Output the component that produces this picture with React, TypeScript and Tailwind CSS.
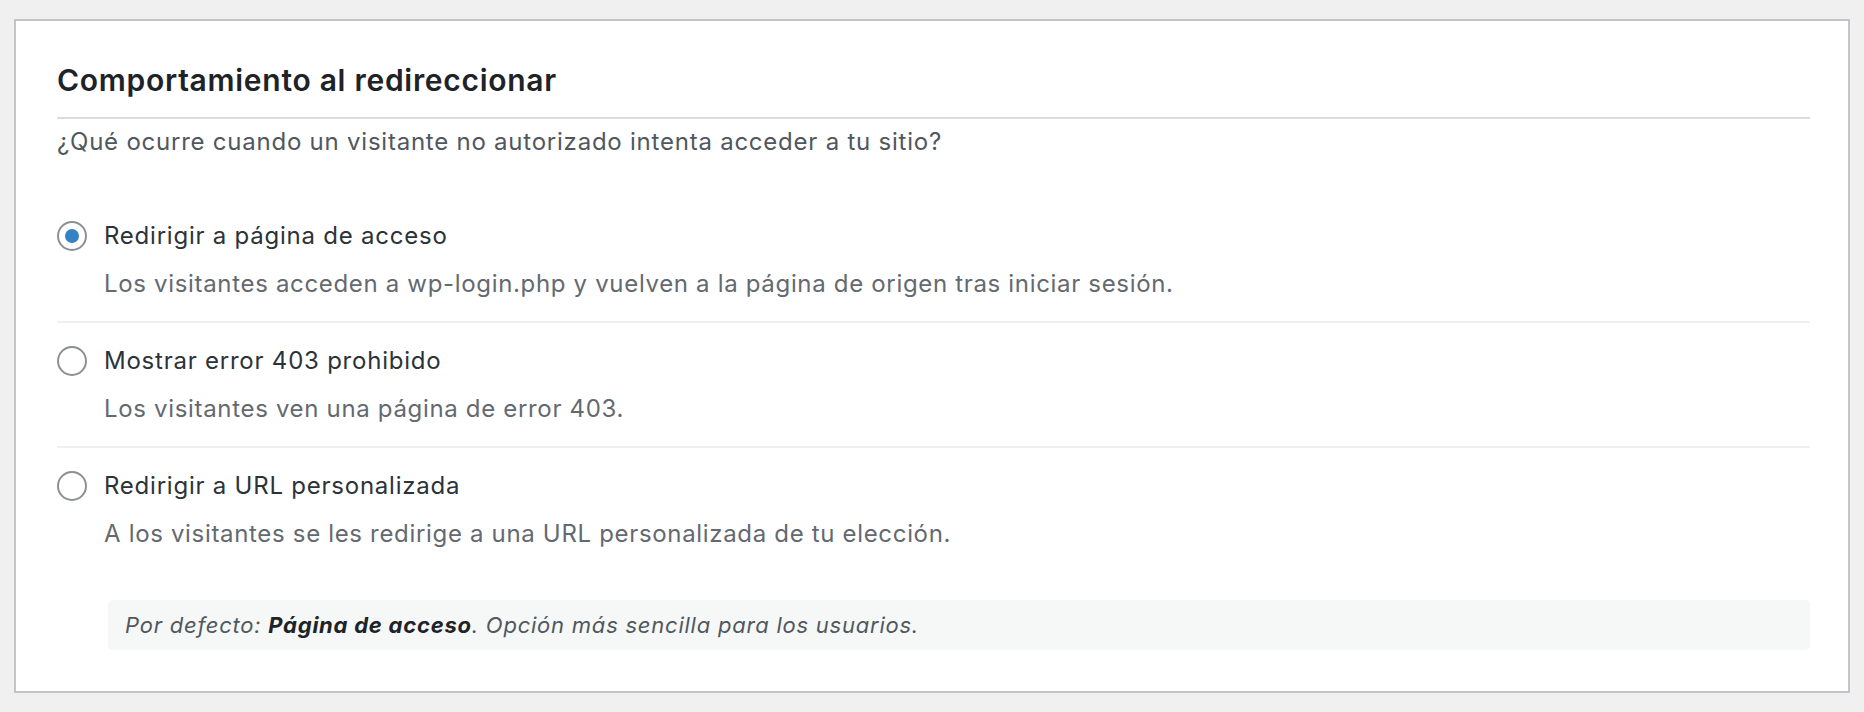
import React, { useState } from "react";

// ── Data ──────────────────────────────────────────────────────────────────────

interface RedirectOption {
  id: string;
  label: string;
  description: string;
}

const OPTIONS: RedirectOption[] = [
  {
    id: "login",
    label: "Redirigir a página de acceso",
    description:
      "Los visitantes acceden a wp-login.php y vuelven a la página de origen tras iniciar sesión.",
  },
  {
    id: "403",
    label: "Mostrar error 403 prohibido",
    description: "Los visitantes ven una página de error 403.",
  },
  {
    id: "custom",
    label: "Redirigir a URL personalizada",
    description: "A los visitantes se les redirige a una URL personalizada de tu elección.",
  },
];

// ── Radio ─────────────────────────────────────────────────────────────────────

function Radio({ checked }: { checked: boolean }) {
  return (
    <span className="flex h-[30px] w-[30px] shrink-0 items-center justify-center rounded-full border-2 border-[#8c8f94] bg-white">
      {checked && <span className="h-[14px] w-[14px] rounded-full bg-[#3582c4]" />}
    </span>
  );
}

// ── Main Export ───────────────────────────────────────────────────────────────

export default function App() {
  const [selected, setSelected] = useState("login");

  return (
    <div
      className="min-h-[712px] bg-[#f0f0f1] px-[14px] pt-[19px] pb-[19px]"
      style={{ fontFamily: "Inter, 'Liberation Sans', Arial, sans-serif" }}
    >
      <div className="border-2 border-[#c3c4c7] bg-white pt-[40px] pr-[38px] pb-[41px] pl-[41px]">
        {/* Header */}
        <h2 className="border-b-2 border-[#dcdcde] pb-[18px] text-[30px] leading-[38px] font-semibold tracking-[0.024em] text-[#1d2327]">
          Comportamiento al redireccionar
        </h2>
        <p className="mt-[7px] text-[24px] leading-[32px] tracking-[0.032em] text-[#50575e]">
          ¿Qué ocurre cuando un visitante no autorizado intenta acceder a tu sitio?
        </p>

        {/* Options */}
        <div className="mt-[40px]">
          {OPTIONS.map((opt, i) => (
            <label
              key={opt.id}
              className={`block cursor-pointer pt-[22px] pb-[21px] ${
                i > 0 ? "border-t-2 border-[#f0f0f1]" : ""
              }`}
              onClick={() => setSelected(opt.id)}
            >
              <div className="flex items-center gap-[17px]">
                <Radio checked={selected === opt.id} />
                <span className="text-[24px] leading-[32px] tracking-[0.032em] text-[#2c3338]">
                  {opt.label}
                </span>
              </div>
              <p className="mt-[16px] pl-[47px] text-[24px] leading-[32px] tracking-[0.028em] text-[#646970]">
                {opt.description}
              </p>
            </label>
          ))}
        </div>

        {/* Note */}
        <div className="mt-[29px] ml-[51px] flex h-[50px] items-center rounded-[5px] bg-[#f6f7f7] px-[17px]">
          <p className="text-[22px] leading-[26px] tracking-[0.035em] text-[#50575e] italic">
            Por defecto: <strong className="font-bold text-[#1d2327]">Página de acceso</strong>.
            Opción más sencilla para los usuarios.
          </p>
        </div>
      </div>
    </div>
  );
}
